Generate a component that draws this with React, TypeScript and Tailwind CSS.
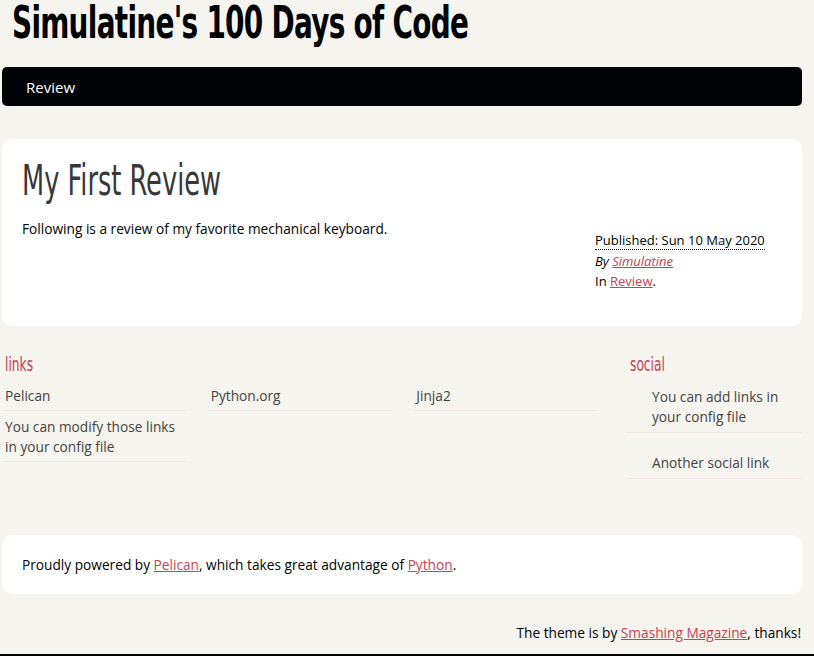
const display = "font-['DejaVu_Sans_Condensed','DejaVu_Sans',sans-serif]";
const link = "text-[#C74350] underline";

const blogroll = [
  "Pelican",
  "Python.org",
  "Jinja2",
  "You can modify those links in your config file",
];

const social = ["You can add links in your config file", "Another social link"];

export default function App() {
  return (
    <div className="h-[656px] overflow-hidden border-b-2 border-black bg-[#F5F4EF] font-['Open_Sans','Liberation_Sans',sans-serif] text-[13.7px] leading-[20px] text-[#000305]">
      <div className="ml-[2px] w-[800px]">
        <header>
          <h1 className={`${display} h-[50px] whitespace-nowrap pl-[10px] text-[44px] font-bold leading-[46px] text-black`}>
            <span className="inline-block origin-left scale-x-[0.705] tracking-[-1px]">Simulatine's 100 Days of Code</span>
          </h1>
          <nav className="mt-[17px] flex h-[39px] items-center rounded-[5px] bg-[#000305] pl-[24px] text-[15px] text-white">
            Review
          </nav>
        </header>

        <article className="mt-[33px] h-[187px] rounded-[10px] bg-white px-[20px] pt-[18px]">
          <h2 className={`${display} whitespace-nowrap text-[42px] leading-[48px] text-[#383838]`}>
            <span className="inline-block origin-left scale-x-[0.68]">My First Review</span>
          </h2>
          <div className="flex justify-between">
            <p className="mt-[14px]">Following is a review of my favorite mechanical keyboard.</p>
            <div className="mr-[15px] mt-[25px] w-[172px] whitespace-nowrap text-[13px] leading-[20.5px]">
              <div>
                <abbr className="border-b border-dotted border-black no-underline">Published: Sun 10 May 2020</abbr>
              </div>
              <div className="italic">
                By <a className={link}>Simulatine</a>
              </div>
              <div>
                In <a className={link}>Review</a>.
              </div>
            </div>
          </div>
        </article>

        <section className="mt-[26px] flex h-[150px] text-[#444]">
          <div className="w-[596px]">
            <h3 className={`${display} whitespace-nowrap pl-[3px] text-[20px] leading-[24px] text-[#C74350]`}>
              <span className="inline-block origin-left scale-x-[0.68]">links</span>
            </h3>
            <ul className="mt-[4px] grid grid-cols-3 gap-x-[21px]">
              {blogroll.map((l) => (
                <li key={l} className="border-b border-[#F1E4E4] px-[3px] pb-[4px] pt-[6px]">
                  {l}
                </li>
              ))}
            </ul>
          </div>
          <div className="ml-[29px] flex-1">
            <h3 className={`${display} whitespace-nowrap pl-[3px] text-[20px] leading-[24px] text-[#C74350]`}>
              <span className="inline-block origin-left scale-x-[0.68]">social</span>
            </h3>
            <ul className="mt-[6px]">
              {social.map((s, i) => (
                <li
                  key={s}
                  className={`border-b border-[#F1E4E4] pb-[5px] pl-[25px] pr-[8px] ${i === 0 ? "pt-[5px]" : "pt-[20px]"}`}
                >
                  {s}
                </li>
              ))}
            </ul>
          </div>
        </section>

        <footer className="mt-[33px] flex h-[59px] items-center rounded-[10px] bg-white px-[20px]">
          <p>
            Proudly powered by <a className={link}>Pelican</a>, which takes great advantage of{" "}
            <a className={link}>Python</a>.
          </p>
        </footer>

        <p className="mt-[29px] pr-[1px] text-right">
          The theme is by <a className={link}>Smashing Magazine</a>, thanks!
        </p>
      </div>
    </div>
  );
}
